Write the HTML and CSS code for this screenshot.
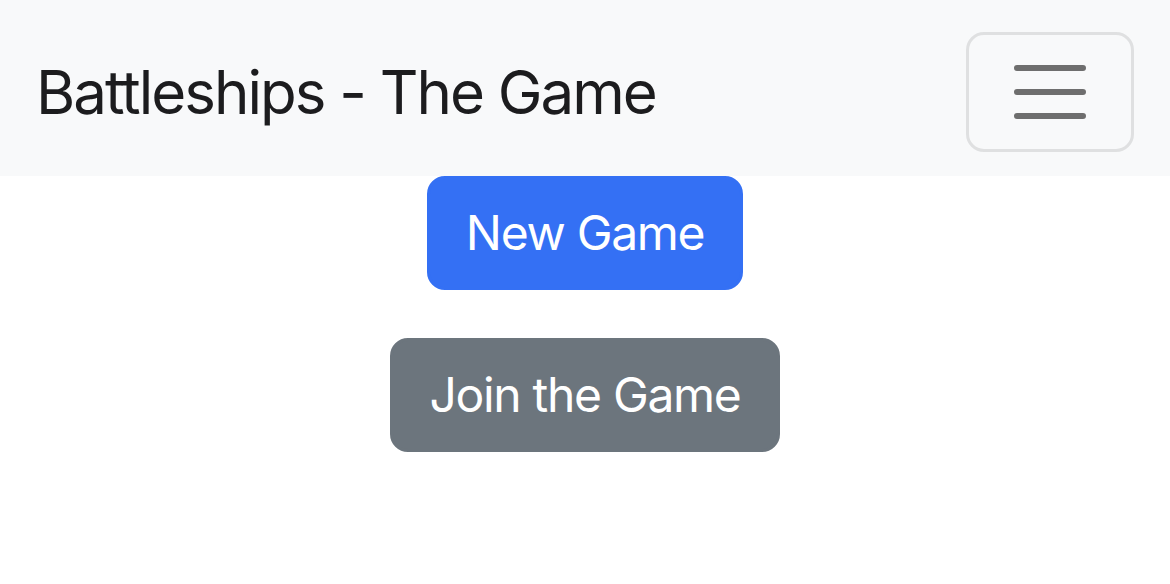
FILE: index.html
```html
<!DOCTYPE html>
<html lang="en">
<head>
<meta charset="utf-8">
<title>Battleships - The Game</title>
<link rel="stylesheet" href="styles.css">
</head>
<body>
<nav class="navbar">
  <a class="brand" href="#">Battleships - The Game</a>
  <button class="toggler" type="button" aria-label="Toggle navigation">
    <svg class="toggler-icon" viewBox="0 0 30 30" width="90" height="90">
      <path d="M4 7h22M4 15h22M4 23h22" stroke="#6e6e6e" stroke-width="2" stroke-linecap="round" fill="none"/>
    </svg>
  </button>
</nav>
<main class="actions">
  <button class="btn btn-primary" type="button">New Game</button>
  <button class="btn btn-secondary" type="button">Join the Game</button>
</main>
</body>
</html>
```
FILE: styles.css
```css
html, body {
  margin: 0;
  padding: 0;
  background: #ffffff;
  font-family: Inter, "Noto Sans", "Liberation Sans", sans-serif;
}

.navbar {
  display: flex;
  align-items: center;
  justify-content: space-between;
  background: #f8f9fa;
  padding: 32px 36px 24px 36px;
  height: 120px;
}

.brand {
  font-size: 60px;
  line-height: 90px;
  color: #1c1c1e;
  text-decoration: none;
  letter-spacing: -2px;
}

.toggler {
  display: flex;
  align-items: center;
  justify-content: center;
  box-sizing: border-box;
  width: 168px;
  height: 120px;
  padding: 0;
  background: transparent;
  border: 3px solid #dfe0e1;
  border-radius: 18px;
}

.toggler-icon {
  display: block;
}

.actions {
  display: flex;
  flex-direction: column;
  align-items: center;
  gap: 48px;
}

.btn {
  font-family: inherit;
  font-size: 48px;
  line-height: 72px;
  padding: 18px 36px;
  border: 3px solid transparent;
  border-radius: 18px;
  color: #ffffff;
  letter-spacing: -1.3px;
}

.btn-primary {
  background: #3470f4;
  border-color: #3470f4;
}

.btn-secondary {
  background: #6c757d;
  border-color: #6c757d;
}
```
